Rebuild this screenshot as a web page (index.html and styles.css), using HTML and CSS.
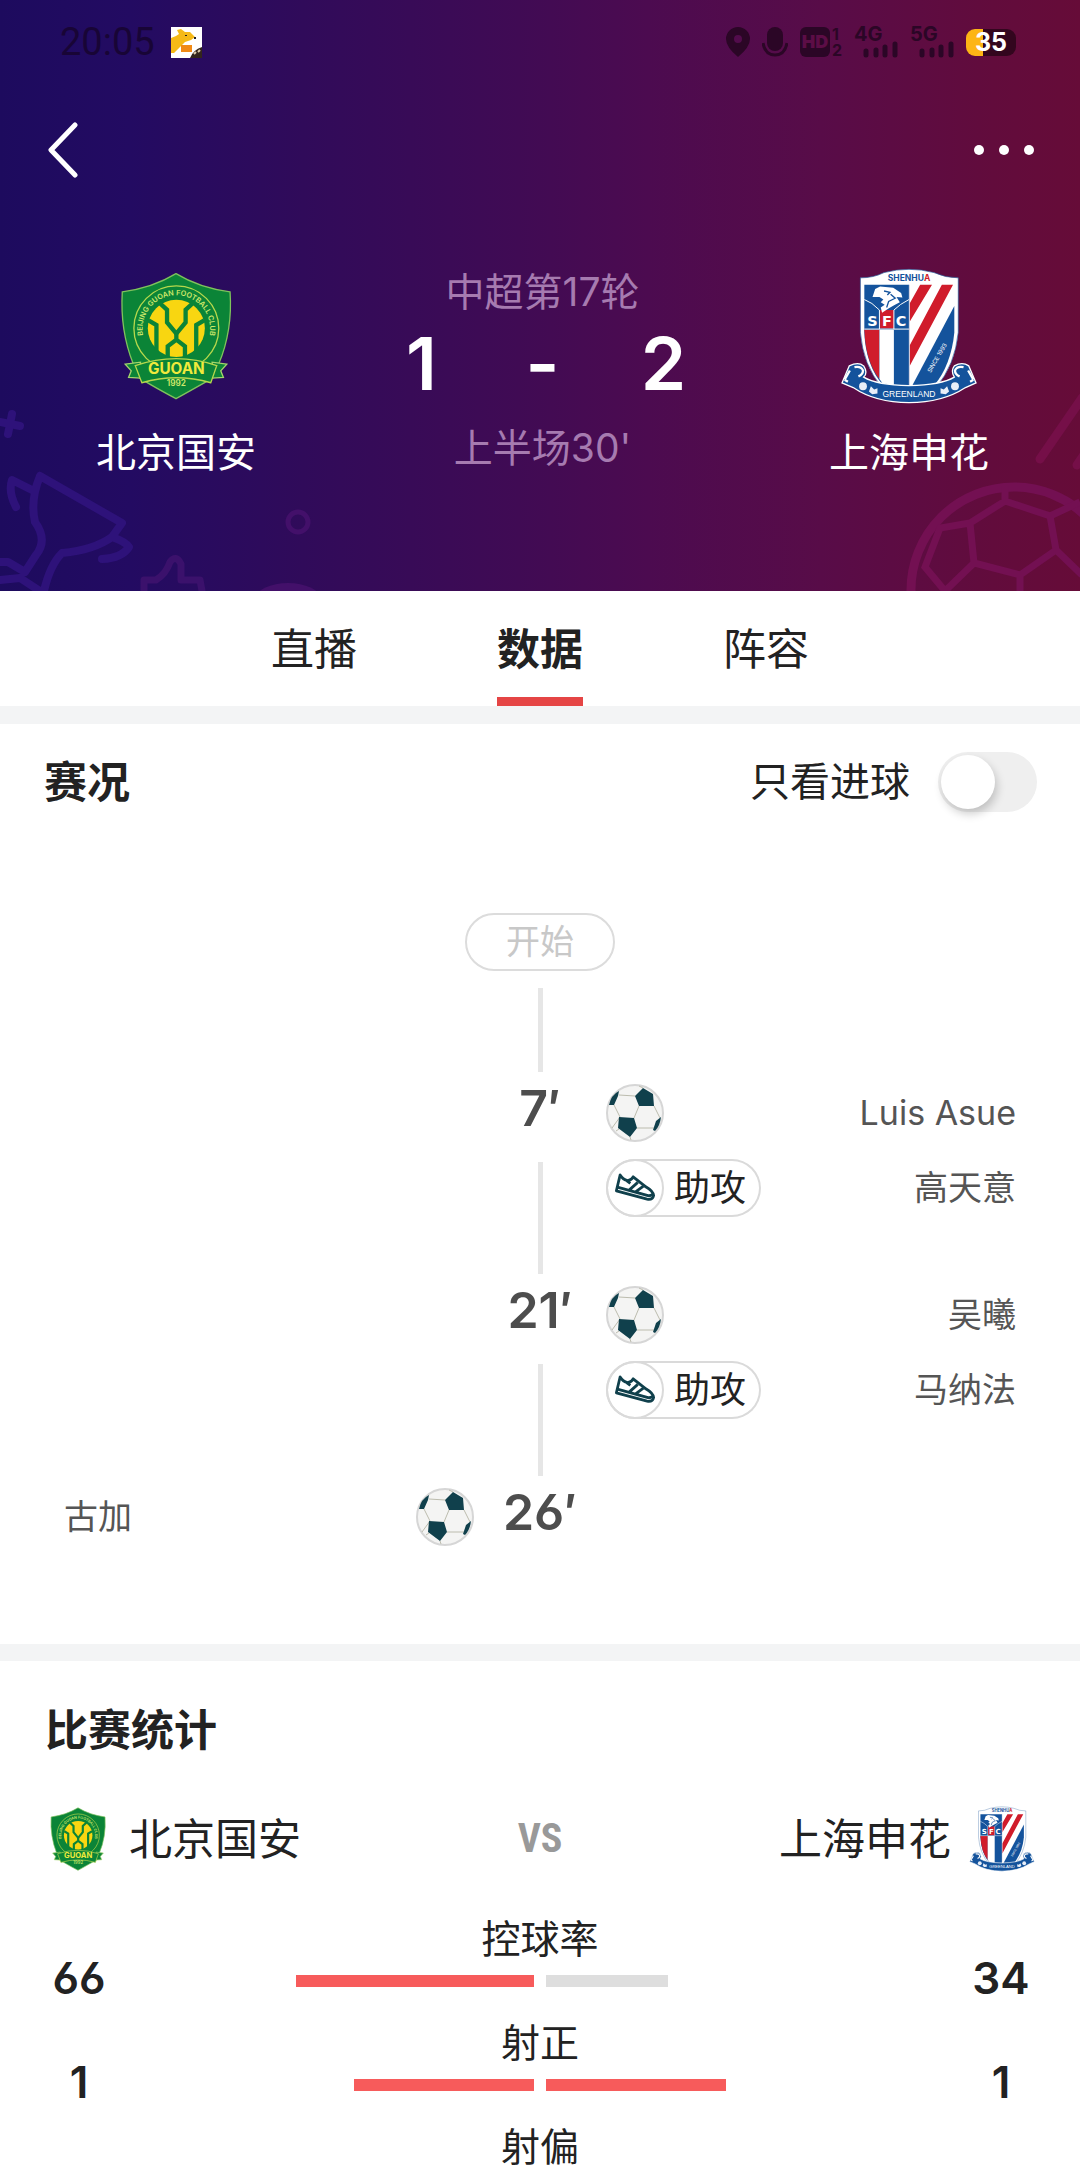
FILE: index.html
```html
<!DOCTYPE html>
<html lang="zh-CN">

<head>
    <meta charset="UTF-8">
    <meta name="viewport" content="width=device-width, initial-scale=1.0">
    <title>北京国安 1 - 2 上海申花</title>
    <link rel="stylesheet" href="styles.css">
</head>

<body>
    <!-- shared icons -->
    <svg class="sprite" aria-hidden="true">
        <symbol id="guoan" viewBox="120 68 338 386">
            <path d="M289 73Q360 116 452 128Q460 245 418 345L404 385Q370 405 289 450Q205 405 176 385L160 345Q120 245 127 128Q218 116 289 73Z" fill="#0b8437" stroke="#7fc35c" stroke-width="4" />
            <circle cx="290" cy="238" r="128" fill="none" stroke="#b6d84c" stroke-width="4" />
            <circle cx="290" cy="238" r="86" fill="#f8d611" />
            <g fill="none" stroke="#0b8437" stroke-width="13">
                <path d="M238 160L262 182V220L290 254L318 220V182L342 160" />
                <path d="M290 254V272L264 292V330M290 272L316 292V330" />
                <path d="M206 214L230 228V306M374 214L350 228V306" />
            </g>
            <path id="guoan-arc" d="M206 298A102 102 0 1 1 374 298" fill="none" />
            <text class="crest-ring"><textPath href="#guoan-arc" startOffset="50%" text-anchor="middle">BEIJING GUOAN FOOTBALL CLUB</textPath></text>
            <path d="M136 346L182 340V388L146 386L154 366ZM442 346L398 340V388L432 386L424 366Z" fill="#0b8437" stroke="#a3d46c" stroke-width="4" />
            <path d="M166 350Q290 308 412 350L394 402Q290 372 186 402Z" fill="#0b8437" stroke="#b6d84c" stroke-width="4" />
            <text class="crest-name" x="290" y="377" text-anchor="middle">GUOAN</text>
            <text class="crest-year" x="290" y="413" text-anchor="middle">1992</text>
        </symbol>
        <symbol id="shenhua" viewBox="120 54 416 414">
            <path d="M180 84Q220 84 252 68Q328 48 404 68Q438 84 478 84V250Q468 350 410 418H246Q188 350 180 250Z" fill="#fff" stroke="#255c9c" stroke-width="2" />
            <path d="M192 105H328V412H250Q196 350 192 250Z" fill="#14539c" />
            <path d="M192 242H238V392Q196 340 192 242Z" fill="#d01c2b" />
            <path d="M238 242H282V412H252L238 392Z" fill="#fff" />
            <path d="M240 182H282V238H240Z" fill="#d01c2b" />
            <path d="M192 240H328M192 150Q215 158 238 182V240M328 150Q300 164 282 182V240" fill="none" stroke="#fff" stroke-width="3" />
            <path d="M217 142L225 118L240 110L280 114L304 130L308 144L290 142L300 158Q280 168 268 176L246 190L242 174L254 166L242 158L250 150L238 142Z" fill="#fff" />
            <path d="M252 124L270 128L262 136M272 134L286 146L266 156L260 174" fill="none" stroke="#14539c" stroke-width="4" />
            <text class="crest-sfc" y="230" text-anchor="middle"><tspan x="217">S</tspan><tspan x="261">F</tspan><tspan x="304">C</tspan></text>
            <path d="M330 105H466V250Q456 350 404 412H330Z" fill="#fff" />
            <path d="M362 105H398L330 218V162ZM428 105H462L330 352V290Z" fill="#d01c2b" />
            <path d="M466 170V250Q456 350 404 412H338Z" fill="#14539c" />
            <path d="M329 105V412" stroke="#ccd" stroke-width="3" />
            <text class="crest-since" transform="translate(394 374) rotate(-60)">SINCE 1993</text>
            <text class="crest-top" x="328" y="93" text-anchor="middle">SHENHU<tspan>A</tspan></text>
            <path d="M124 404L146 352Q174 338 190 352Q204 374 190 386Q230 410 328 412Q426 410 466 386Q454 368 466 352Q490 338 510 352L532 404L500 418Q430 464 328 464Q226 464 158 418Z" fill="#14539c" stroke="#fff" stroke-width="4" />
            <path d="M132 394L148 366M142 400L132 394M524 394L508 366M514 400L524 394M162 356Q182 352 188 366Q188 378 174 384M494 356Q474 352 468 366Q468 378 482 384" fill="none" stroke="#fff" stroke-width="7" />
            <g fill="#e8eef8">
                <circle cx="188" cy="414" r="12" />
                <circle cx="468" cy="414" r="12" />
                <path d="M206 430L212 414L222 424L232 420V436L216 438ZM450 430L444 414L434 424L424 420V436L440 438Z" />
            </g>
            <text class="crest-bottom" x="328" y="446" text-anchor="middle">GREENLAND</text>
        </symbol>
        <symbol id="ball" viewBox="0 0 58 58">
            <circle cx="29" cy="29" r="28" fill="#f4f4f3" stroke="#d6d6d6" stroke-width="2" />
            <path d="M13 11L29 12M8 21L14 33L6 44M33 22L28 34M48 22L54 34M31 44H48M13 45L10 47M24 53L25 56M37 4L33 2" fill="none" stroke="#bcbcae" />
            <path d="M37 4L47 10L48 22H33L29 12ZM13 33L28 34L31 44L24 53L12 44ZM3 21Q5 11 13 7L12 12L8 21ZM47 46L50 37L55 33Q54 42 49 47Z" fill="#10404c" />
        </symbol>
        <symbol id="shoe" viewBox="0 0 58 58">
            <path d="M13 15L9 32L42 41Q48 42 49 37Q48 32 41 28L27 17Q25 21 21 21Q16 20 13 15Z" fill="#fff" stroke="#10404c" stroke-width="3" stroke-linejoin="round" />
            <path d="M10 28L42 37Q45 38 48 36M23 31L32 23M30 33L38 27M20 21L24 24" fill="none" stroke="#10404c" stroke-width="3" />
        </symbol>
    </svg>

    <header class="hero">
        <svg class="deco deco-left" viewBox="0 391 320 200" fill="none" stroke="#2e127a" stroke-width="8" stroke-linecap="round" stroke-linejoin="round" aria-hidden="true">
            <path d="M12 414L8 434M0 422L20 426" />
            <path d="M16 507Q8 492 12 480L32 490M40 476L122 523L112 537Q94 550 62 553Q50 565 44 591M40 476Q30 500 35 522Q48 540 36 555L25 572L8 562H0M0 580L20 578L40 591M112 537Q126 542 129 547Q122 558 102 559" />
            <path d="M144 591V580H156Q166 574 170 562Q176 554 181 564V580H200L202 591" stroke="#3b116c" stroke-width="7" />
            <circle cx="298" cy="522" r="10" stroke="#43106a" stroke-width="5" />
            <ellipse cx="288" cy="598" rx="32" ry="15" fill="#43106a" stroke="none" />
        </svg>
        <svg class="deco deco-right" viewBox="880 391 200 200" fill="none" stroke="#731052" stroke-width="9" aria-hidden="true">
            <circle cx="1014" cy="590" r="103" />
            <path d="M1005 501L1050 516L1056 550L1020 575L974 563L970 523ZM1005 501V486M970 523L940 528L925 567L945 591L974 563M1020 575V591M1056 550L1082 575M1050 516L1080 502" stroke-width="7" />
            <path d="M1040 459L1082 398M1077 465L1084 455" stroke="#750f48" stroke-linecap="round" />
        </svg>

        <div class="status">
            <div class="status-left">
                <time>20:05</time>
                <svg width="31" height="31" viewBox="0 0 31 31" aria-hidden="true">
                    <path fill="#fff" d="M0 0H31V31H0Z" />
                    <path fill="#f5b916" d="M0 11L5 9L8 7L6 3L10 2L14 5L19 5L24 10L20 13L14 15L9 20L3 26H0Z" />
                    <path fill="#f08a16" d="M10 18H21V25H10Z" />
                    <path fill="#222" d="M14 8H16V9H14ZM23 10H25V12H23Z" />
                    <path fill="#33251c" d="M31 20V31H19Q22 23 31 20Z" />
                    <path stroke="#dca" fill="none" d="M23 27L25 25M27 25L29 23" stroke-width="2" />
                </svg>
            </div>
            <div class="status-right">
                <svg width="24" height="31" viewBox="0 0 24 31" aria-hidden="true">
                    <path fill="#2b0626" fill-rule="evenodd" d="M12 0A12 12 0 0 1 24 12Q24 20 12 30Q0 20 0 12A12 12 0 0 1 12 0ZM12 8A4 4 0 1 0 12 16A4 4 0 1 0 12 8Z" />
                </svg>
                <svg width="26" height="31" viewBox="0 0 26 31" aria-hidden="true">
                    <rect x="5" width="16" height="24" rx="8" fill="#2b0626" />
                    <path d="M1 16Q3 28 13 28T25 16" fill="none" stroke="#2b0626" stroke-width="3" />
                </svg>
                <span class="hd"><b>HD</b><i>1<br>2</i></span>
                <span class="net">4G<svg width="35" height="17" viewBox="0 0 35 17" aria-hidden="true">
                        <path d="M3 10V14M13 9V14M22 6V14M32 3V14" stroke="#2b0626" stroke-width="5" stroke-linecap="round" />
                    </svg></span>
                <span class="net">5G<svg width="35" height="17" viewBox="0 0 35 17" aria-hidden="true">
                        <path d="M3 10V14M13 9V14M22 6V14M32 3V14" stroke="#2b0626" stroke-width="5" stroke-linecap="round" />
                    </svg></span>
                <span class="battery">35</span>
            </div>
        </div>

        <div class="toolbar">
            <button class="icon-btn" aria-label="返回">
                <svg width="30" height="56" viewBox="0 0 30 56"><path d="M27 3L3 28L27 53" fill="none" stroke="#fff" stroke-width="5" stroke-linecap="round" stroke-linejoin="round" /></svg>
            </button>
            <button class="icon-btn" aria-label="更多">
                <svg width="60" height="56" viewBox="0 0 60 56" fill="#fff"><circle cx="5" cy="28" r="5" /><circle cx="30" cy="28" r="5" /><circle cx="55" cy="28" r="5" /></svg>
            </button>
        </div>

        <div class="scoreboard">
            <div class="team">
                <svg class="crest" role="img" aria-label="北京国安"><use href="#guoan" /></svg>
                <span>北京国安</span>
            </div>
            <div class="result">
                <p>中超第17轮</p>
                <div class="score"><b>1</b><b>-</b><b>2</b></div>
                <p>上半场30'</p>
            </div>
            <div class="team">
                <svg class="crest" role="img" aria-label="上海申花"><use href="#shenhua" /></svg>
                <span>上海申花</span>
            </div>
        </div>
    </header>

    <nav class="tabs">
        <a href="#live">直播</a>
        <a href="#data" class="active">数据</a>
        <a href="#lineup">阵容</a>
    </nav>

    <section class="events" id="data">
        <div class="section-head">
            <h2>赛况</h2>
            <label class="switch">只看进球 <input type="checkbox"></label>
        </div>
        <div class="start">开始</div>
        <div class="line"></div>
        <ol class="timeline">
            <li>
                <div class="mid"><time>7′</time><div class="line"></div></div>
                <div class="side away">
                    <div class="row"><svg class="ball" aria-hidden="true"><use href="#ball" /></svg><span>Luis Asue</span></div>
                    <div class="row"><span class="assist"><svg aria-hidden="true"><use href="#shoe" /></svg>助攻</span><span>高天意</span></div>
                </div>
            </li>
            <li>
                <div class="mid"><time>21′</time><div class="line"></div></div>
                <div class="side away">
                    <div class="row"><svg class="ball" aria-hidden="true"><use href="#ball" /></svg><span>吴曦</span></div>
                    <div class="row"><span class="assist"><svg aria-hidden="true"><use href="#shoe" /></svg>助攻</span><span>马纳法</span></div>
                </div>
            </li>
            <li>
                <div class="mid"><time>26′</time></div>
                <div class="side home">
                    <div class="row"><span>古加</span><svg class="ball" aria-hidden="true"><use href="#ball" /></svg></div>
                </div>
            </li>
        </ol>
    </section>

    <section class="stats">
        <h2>比赛统计</h2>
        <div class="versus">
            <div class="club"><svg class="crest-small" aria-hidden="true"><use href="#guoan" /></svg>北京国安</div>
            <b>VS</b>
            <div class="club right">上海申花<svg class="crest-small" aria-hidden="true"><use href="#shenhua" /></svg></div>
        </div>
        <div class="stat">
            <span class="value">66</span>
            <div class="chart">
                <p>控球率</p>
                <div class="bars">
                    <div><i class="win" style="width:66%"></i></div>
                    <div><i style="width:34%"></i></div>
                </div>
            </div>
            <span class="value">34</span>
        </div>
        <div class="stat">
            <span class="value">1</span>
            <div class="chart">
                <p>射正</p>
                <div class="bars">
                    <div><i class="win" style="width:50%"></i></div>
                    <div><i class="win" style="width:50%"></i></div>
                </div>
            </div>
            <span class="value">1</span>
        </div>
        <div class="stat last">
            <div class="chart">
                <p>射偏</p>
            </div>
        </div>
    </section>
</body>

</html>
```

FILE: styles.css
```css
* {
    box-sizing: border-box;
    margin: 0;
    padding: 0;
}

body {
    background: #fff;
    color: #222;
    font-family: Inter, "Noto Sans CJK SC", sans-serif;
    font-size: 40px;
    line-height: 48px;
}

a {
    color: inherit;
    text-decoration: none;
}

svg {
    display: block;
    flex-shrink: 0;
}

.sprite {
    position: absolute;
    width: 0;
    height: 0;
}

/* lettering on the club crests */
.crest-ring {
    fill: #cfe86a;
    font-size: 22px;
    font-weight: 600;
}

.crest-name {
    fill: #f0ea3c;
    font-size: 46px;
    font-weight: 700;
}

.crest-year {
    fill: #cfe86a;
    font-size: 25px;
    font-weight: 600;
}

.crest-sfc {
    fill: #fff;
    font-family: "DejaVu Sans", sans-serif;
    font-size: 44px;
    font-weight: 700;
}

.crest-since {
    fill: #fff;
    font-size: 18px;
}

.crest-top {
    fill: #14539c;
    font-size: 26px;
    font-weight: 700;
}

.crest-top tspan {
    fill: #d01c2b;
}

.crest-bottom {
    fill: #fff;
    font-family: "Liberation Sans", sans-serif;
    font-size: 26px;
}

/* header */
.hero {
    position: relative;
    padding: 24px 43px 114px 48px;
    color: #fff;
    background: linear-gradient(90deg, #1d0b5e 0%, #230b62 12%, #300b5a 28%, #400b54 48%, #4c0b50 60%, #580c48 76%, #620c3c 92%, #660c38 100%);
}

.deco {
    position: absolute;
    bottom: 0;
    height: 200px;
}

.deco-left {
    left: 0;
    width: 320px;
}

.deco-right {
    right: 0;
    width: 200px;
}

.status,
.toolbar,
.status-left,
.status-right {
    display: flex;
    align-items: center;
}

.status,
.toolbar {
    justify-content: space-between;
    position: relative;
}

.status {
    height: 36px;
    padding: 0 17px 0 12px;
    color: #2b0626;
}

.status-left {
    gap: 16px;
    color: #180536;
    font-family: Roboto, sans-serif;
    font-size: 38px;
}

.status-right {
    gap: 12px;
    font-size: 20px;
    font-weight: 700;
}

.hd {
    display: flex;
    align-items: center;
    gap: 2px;
    line-height: 16px;
}

.hd b {
    width: 30px;
    border-radius: 6px;
    background: #2b0626;
    color: #5c0d46;
    font-size: 18px;
    line-height: 30px;
    text-align: center;
}

.hd i {
    font-size: 16px;
    font-style: normal;
}

.net {
    display: flex;
    flex-direction: column;
    width: 44px;
    line-height: 14px;
}

.net svg {
    align-self: flex-end;
}

.battery {
    width: 50px;
    margin-right: 4px;
    border-radius: 9px;
    background: linear-gradient(90deg, #fdb515 34%, #33061e 34%);
    color: #fff;
    font-size: 25px;
    font-weight: 700;
    line-height: 27px;
    text-align: center;
}

.toolbar {
    margin-top: 62px;
}

.icon-btn {
    border: 0;
    background: none;
}

.toolbar .icon-btn:last-child {
    margin-right: 3px;
}

.scoreboard {
    display: flex;
    justify-content: space-between;
    position: relative;
    margin-top: 90px;
}

.team {
    display: flex;
    flex-direction: column;
    align-items: center;
    width: 256px;
    gap: 25px;
}

.crest {
    width: 138px;
    height: 136px;
}

.team:first-child .crest {
    height: 128px;
    margin: 4px 0;
}

.result {
    flex: 1;
    max-width: 288px;
    text-align: center;
}

.result p {
    color: #a67bb0;
    font-size: 39px;
}

.score {
    display: flex;
    justify-content: space-between;
    font-size: 73px;
    line-height: 96px;
    padding-bottom: 12px;
}

.score b {
    width: 46px;
    font-weight: 600;
}

/* tabs */
.tabs {
    display: flex;
    justify-content: center;
    gap: 140px;
    border-bottom: 18px solid #f3f4f5;
}

.tabs a {
    padding: 34px 0 24px;
    border-bottom: 9px solid transparent;
    font-size: 43px;
}

.tabs .active {
    border-color: #e54545;
    font-weight: 700;
}

h2 {
    font-size: 43px;
    font-weight: 700;
}

/* match events */
.events {
    padding-bottom: 81px;
    border-bottom: 17px solid #f3f4f5;
}

.section-head {
    display: flex;
    align-items: center;
    justify-content: space-between;
    padding: 28px 43px 0 44px;
}

.switch {
    display: flex;
    align-items: center;
    gap: 28px;
}

.switch input {
    appearance: none;
    width: 99px;
    height: 60px;
    border-radius: 30px;
    padding: 3px;
    background: #efefef;
}

.switch input::before {
    content: "";
    display: block;
    width: 54px;
    height: 54px;
    border-radius: 50%;
    background: #fff;
    box-shadow: 2px 5px 10px rgba(0, 0, 0, .2);
}

.switch input:checked {
    background: #e54545;
}

.switch input:checked::before {
    margin-left: auto;
}

.start {
    width: 150px;
    margin: 101px auto 17px;
    border: 2px solid #dcdcdc;
    border-radius: 29px;
    color: #c8c8c8;
    font-size: 34px;
    line-height: 54px;
    text-align: center;
}

.line {
    width: 5px;
    height: 84px;
    margin: 0 auto;
    background: #e6e6e6;
}

.timeline {
    list-style: none;
    padding: 12px 64px 0;
}

.timeline li {
    display: grid;
    grid-template-columns: 1fr 132px 1fr;
}

.mid {
    grid-area: 1 / 2;
}

.mid time {
    display: block;
    color: #4d4d4d;
    font-size: 50px;
    font-weight: 600;
    font-feature-settings: "cv03";
    text-align: center;
}

.mid .line {
    height: 112px;
    margin: 30px auto 12px;
}

.home {
    grid-area: 1 / 1;
}

.away {
    grid-area: 1 / 3;
}

.row {
    display: flex;
    align-items: center;
    justify-content: space-between;
    margin-bottom: 17px;
    color: #555;
    font-size: 34px;
}

.ball,
.assist svg {
    width: 58px;
    height: 58px;
}

.assist {
    display: flex;
    align-items: center;
    gap: 10px;
    width: 155px;
    border-radius: 29px;
    box-shadow: inset 0 0 0 2px #dadada;
    color: #222;
    font-size: 36px;
}

.assist svg {
    border: 2px solid #dadada;
    border-radius: 50%;
}

/* statistics */
.stats {
    padding: 45px 45px 0;
}

.versus {
    display: flex;
    align-items: center;
    justify-content: space-between;
    height: 68px;
    margin-top: 51px;
}

.versus b {
    color: #999;
    font-family: "Roboto Condensed", "Liberation Sans Narrow", Roboto, sans-serif;
    font-size: 40px;
}

.club {
    display: flex;
    align-items: center;
    gap: 18px;
    font-size: 43px;
}

.crest-small {
    width: 66px;
    height: 64px;
}

.right .crest-small {
    height: 68px;
}

.stat {
    display: grid;
    grid-template-columns: 68px minmax(0, 732px) 68px;
    justify-content: space-between;
    margin-top: 42px;
}

.stat + .stat {
    margin-top: 32px;
}

.stat p {
    font-size: 39px;
    text-align: center;
}

.stat.last .chart {
    grid-column: 2;
}

.value {
    align-self: end;
    font-size: 44px;
    font-weight: 600;
    font-feature-settings: "cv03";
    line-height: 18px;
    text-align: center;
}

.bars {
    display: grid;
    grid-template-columns: 1fr 1fr;
    gap: 12px;
    margin-top: 12px;
}

.bars div {
    display: flex;
}

.bars div:first-child {
    justify-content: flex-end;
}

.bars i {
    height: 12px;
    background: #dedede;
}

.bars .win {
    background: #f75b5b;
}
```
